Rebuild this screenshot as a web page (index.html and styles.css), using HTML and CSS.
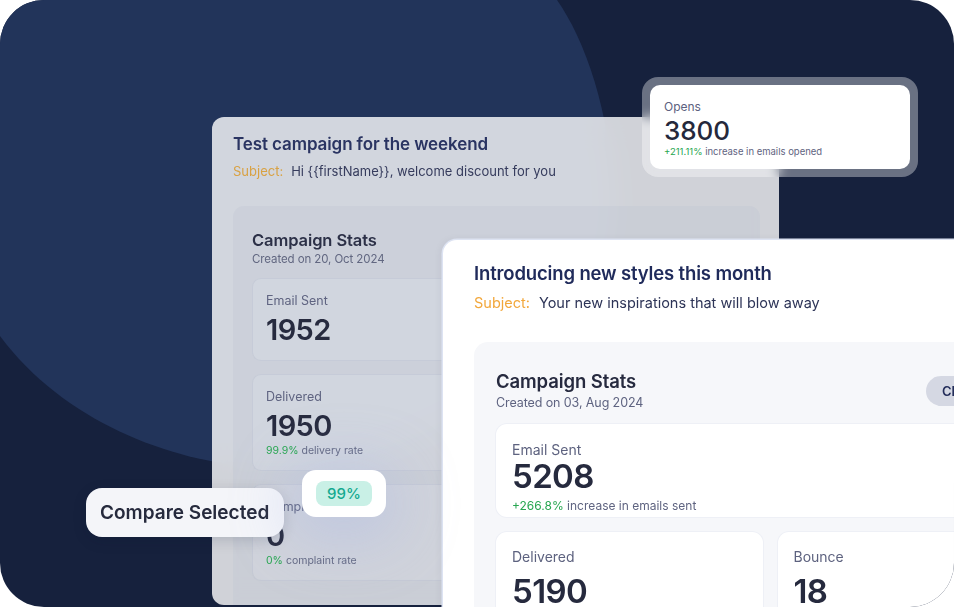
FILE: index.html
```html
<!DOCTYPE html>
<html lang="en">
<head>
<meta charset="utf-8">
<title>Campaign comparison</title>
<link rel="stylesheet" href="styles.css">
</head>
<body>
<div class="stage">
  <svg class="stage__blob" width="954" height="607" viewBox="0 0 954 607" aria-hidden="true">
    <path d="M0 0 H557 C585 40 610 110 614 200 C618 340 440 468 280 468 C190 468 70 430 0 336 Z" fill="#22345a"/>
  </svg>

  <section class="campaign campaign--back">
    <h2 class="campaign__title">Test campaign for the weekend</h2>
    <p class="campaign__subject"><span class="campaign__subject-label">Subject:</span>Hi {{firstName}}, welcome discount for you</p>
    <div class="stats">
      <div class="stats__head">
        <div>
          <h3 class="stats__title">Campaign Stats</h3>
          <p class="stats__date">Created on 20, Oct 2024</p>
        </div>
      </div>
      <div class="stats__grid">
        <div class="stat stat--wide">
          <span class="stat__label">Email Sent</span>
          <span class="stat__value">1952</span>
        </div>
        <div class="stat">
          <span class="stat__label">Delivered</span>
          <span class="stat__value">1950</span>
          <span class="stat__note"><b>99.9%</b> delivery rate</span>
        </div>
        <div class="stat">
          <span class="stat__label">Bounce</span>
          <span class="stat__value">2</span>
          <span class="stat__note"><b>0.1%</b> bounce rate</span>
        </div>
        <div class="stat">
          <span class="stat__label">Complaints</span>
          <span class="stat__value">0</span>
          <span class="stat__note"><b>0%</b> complaint rate</span>
        </div>
        <div class="stat">
          <span class="stat__label">Unsubscribed</span>
          <span class="stat__value">1</span>
          <span class="stat__note"><b>0.05%</b> unsubscribe rate</span>
        </div>
      </div>
    </div>
  </section>

  <section class="campaign campaign--front">
    <h2 class="campaign__title">Introducing new styles this month</h2>
    <p class="campaign__subject"><span class="campaign__subject-label">Subject:</span>Your new inspirations that will blow away</p>
    <div class="stats">
      <div class="stats__head">
        <div>
          <h3 class="stats__title">Campaign Stats</h3>
          <p class="stats__date">Created on 03, Aug 2024</p>
        </div>
        <button class="stats__btn" type="button">Clone campaign</button>
      </div>
      <div class="stats__grid">
        <div class="stat stat--wide">
          <span class="stat__label">Email Sent</span>
          <span class="stat__value">5208</span>
          <span class="stat__note"><b>+266.8%</b> increase in emails sent</span>
        </div>
        <div class="stat">
          <span class="stat__label">Delivered</span>
          <span class="stat__value">5190</span>
          <span class="stat__note"><b>99.7%</b> delivery rate</span>
        </div>
        <div class="stat">
          <span class="stat__label">Bounce</span>
          <span class="stat__value">18</span>
          <span class="stat__note"><b>0.3%</b> bounce rate</span>
        </div>
      </div>
    </div>
  </section>

  <div class="opens">
    <div class="opens__inner">
      <span class="opens__label">Opens</span>
      <span class="opens__value">3800</span>
      <span class="opens__note"><b>+211.11%</b> increase in emails opened</span>
    </div>
  </div>

  <div class="compare-pill">Compare Selected</div>

  <div class="rate-pill"><span class="rate-pill__badge">99%</span></div>
</div>
</body>
</html>
```

FILE: styles.css
```css
* {
  box-sizing: border-box;
  margin: 0;
  padding: 0;
}

html,
body {
  background: #ffffff;
}

body {
  margin: 0;
  font-family: "Inter", "Noto Sans", sans-serif;
}

.stage {
  position: relative;
  width: 954px;
  height: 607px;
  border-radius: 44px;
  overflow: hidden;
  background: #16213d;
}

.stage__blob {
  position: absolute;
  left: 0;
  top: 0;
  display: block;
}

/* ---------- campaign cards ---------- */
.campaign {
  position: absolute;
  overflow: hidden;
}

.campaign__title {
  font-weight: 600;
}

.campaign__subject-label {
  display: inline-block;
}

.stats__head {
  display: flex;
  align-items: center;
  justify-content: space-between;
}

.stats__title {
  font-weight: 600;
}

.stats__grid {
  display: grid;
  grid-template-columns: 1fr 1fr;
}

.stat {
  display: flex;
  flex-direction: column;
}

.stat--wide {
  grid-column: 1 / -1;
}

.stat__value {
  font-weight: 600;
}

.stat__note b,
.opens__note b {
  font-weight: 400;
  color: #27a650;
}

/* back card */
.campaign--back {
  left: 212px;
  top: 117px;
  width: 567px;
  height: 488px;
  padding: 16px 19px 0 21px;
  border-radius: 12px;
  background: rgba(255, 255, 255, 0.8);
  backdrop-filter: blur(14px);
}

.campaign--back .campaign__title {
  font-size: 17px;
  line-height: 22px;
  color: #2a3462;
  letter-spacing: -0.1px;
}

.campaign--back .campaign__subject {
  margin-top: 7px;
  font-size: 13px;
  line-height: 18px;
  color: #363c5d;
}

.campaign--back .campaign__subject-label {
  color: #d9a243;
  margin-right: 8px;
}

.campaign--back .stats {
  margin-top: 26px;
  height: 420px;
  padding: 24px 19px 0 19px;
  border-radius: 11px;
  background: rgba(186, 192, 208, 0.26);
}

.campaign--back .stats__title {
  font-size: 16.5px;
  line-height: 20px;
  color: #2c3047;
  letter-spacing: -0.1px;
}

.campaign--back .stats__date {
  margin-top: 2px;
  font-size: 11.5px;
  line-height: 14px;
  color: #626781;
  letter-spacing: -0.1px;
}

.campaign--back .stats__grid {
  margin-top: 12px;
  gap: 13px 13px;
}

.campaign--back .stat {
  padding: 15px 14px 16px;
  border-radius: 9px;
  background: rgba(255, 255, 255, 0.12);
  box-shadow: inset 0 0 0 1px rgba(170, 176, 196, 0.28);
}

.campaign--back .stat__label {
  font-size: 12.5px;
  line-height: 16px;
  color: #5f6481;
}

.campaign--back .stat__value {
  margin-top: 6px;
  font-size: 29px;
  line-height: 30px;
  color: #272b3f;
  letter-spacing: -0.6px;
}

.campaign--back .stat__note {
  margin-top: 3px;
  font-size: 10.5px;
  line-height: 13px;
  color: #626781;
}

.campaign--back .stat:not(.stat--wide) {
  padding-bottom: 14px;
}

/* front card */
.campaign--front {
  left: 443px;
  top: 240px;
  width: 654px;
  height: 420px;
  padding: 21px 31px 0 31px;
  border-radius: 14px;
  background: #ffffff;
  box-shadow: 0 0 0 1.5px #dde3f2, -2px 0 8px rgba(10, 20, 60, 0.06);
}

.campaign--front .campaign__title {
  font-size: 18.5px;
  line-height: 24px;
  color: #202b5b;
  letter-spacing: -0.15px;
}

.campaign--front .campaign__subject {
  margin-top: 8px;
  font-size: 14.5px;
  line-height: 20px;
  color: #2d3457;
}

.campaign--front .campaign__subject-label {
  color: #f2a73b;
  margin-right: 9px;
}

.campaign--front .stats {
  margin-top: 29px;
  height: 400px;
  padding: 28px 22px 0 22px;
  border-radius: 14px;
  background: #f6f7fa;
}

.campaign--front .stats__title {
  font-size: 18.5px;
  line-height: 22px;
  color: #262a3f;
  letter-spacing: -0.1px;
}

.campaign--front .stats__date {
  margin-top: 3px;
  font-size: 12.5px;
  line-height: 16px;
  color: #5f6481;
  letter-spacing: -0.1px;
}

.stats__btn {
  width: 118px;
  height: 30px;
  padding: 0 16px;
  border: 0;
  border-radius: 15px;
  background: #d5d8e3;
  font-family: inherit;
  font-size: 13px;
  font-weight: 600;
  color: #232d5a;
  text-align: left;
  white-space: nowrap;
}

.campaign--front .stats__grid {
  margin-top: 13px;
  gap: 15px 15px;
}

.campaign--front .stat {
  padding: 16px 16px 16px;
  border-radius: 11px;
  background: #ffffff;
  box-shadow: 0 0 0 1px #eef0f6;
}

.campaign--front .stat--wide {
  padding: 17px 16px 3px;
}

.campaign--front .stat__label {
  font-size: 14px;
  line-height: 18px;
  color: #5d627f;
}

.campaign--front .stat__value {
  margin-top: 8px;
  font-size: 33px;
  line-height: 34px;
  color: #262a3e;
  letter-spacing: -0.6px;
}

.campaign--front .stat--wide .stat__value {
  margin-top: 0;
}

.campaign--front .stat__note {
  margin-top: 5px;
  font-size: 12px;
  line-height: 16px;
  color: #5f6481;
}

/* opens card */
.opens {
  position: absolute;
  left: 642px;
  top: 77px;
  width: 276px;
  height: 100px;
  padding: 8px;
  border-radius: 16px;
  background: rgba(255, 255, 255, 0.36);
  backdrop-filter: blur(6px);
}

.opens__inner {
  display: flex;
  flex-direction: column;
  height: 84px;
  padding: 14px 12px 10px 14px;
  border-radius: 10px;
  background: #ffffff;
}

.opens__label {
  font-size: 12px;
  line-height: 16px;
  color: #5c6180;
}

.opens__value {
  margin-top: 2px;
  font-size: 26px;
  line-height: 28px;
  font-weight: 500;
  color: #25283b;
  letter-spacing: -0.1px;
}

.opens__note {
  font-size: 9.5px;
  line-height: 13px;
  color: #5f6481;
}

/* floating pills */
.compare-pill {
  position: absolute;
  left: 86px;
  top: 488px;
  height: 49px;
  padding: 0 15px 0 14px;
  display: flex;
  align-items: center;
  border-radius: 16px;
  background: #f4f5f9;
  box-shadow: 0 4px 14px rgba(10, 20, 50, 0.15);
  font-size: 19px;
  font-weight: 600;
  color: #262a3d;
  letter-spacing: 0;
  white-space: nowrap;
}

.rate-pill {
  position: absolute;
  left: 302px;
  top: 470px;
  width: 84px;
  height: 47px;
  display: flex;
  align-items: center;
  justify-content: center;
  border-radius: 14px;
  background: #ffffff;
  box-shadow: 0 10px 60px 12px rgba(160, 178, 235, 0.35);
}

.rate-pill__badge {
  height: 25px;
  padding: 0 11px;
  border-radius: 8px;
  background: #c9f0e6;
  font-size: 15px;
  line-height: 25px;
  font-weight: 500;
  color: #14a98f;
}
```
